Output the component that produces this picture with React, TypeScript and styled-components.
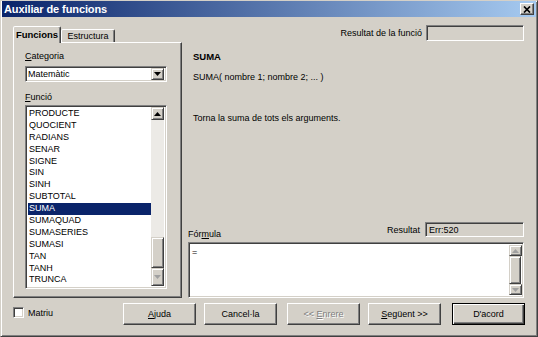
import React from "react";
import styled, { createGlobalStyle } from "styled-components";

const FUNCTIONS = [
  "PRODUCTE",
  "QUOCIENT",
  "RADIANS",
  "SENAR",
  "SIGNE",
  "SIN",
  "SINH",
  "SUBTOTAL",
  "SUMA",
  "SUMAQUAD",
  "SUMASERIES",
  "SUMASI",
  "TAN",
  "TANH",
  "TRUNCA",
];

const GlobalStyle = createGlobalStyle`
  html, body {
    margin: 0;
    padding: 0;
    background: #d4d0c8;
  }
  body {
    font-family: "Liberation Sans", Arial, sans-serif;
    font-size: 9px;
    color: #000;
  }
  * {
    box-sizing: border-box;
  }
`;

const Window = styled.div`
  width: 538px;
  height: 337px;
  background: #d4d0c8;
  border: 1px solid;
  border-color: #d4d0c8 #404040 #404040 #d4d0c8;
  box-shadow: inset 1px 1px #fff, inset -1px -1px #808080;
  padding: 1px;
  display: flex;
  flex-direction: column;
`;

const TitleBar = styled.div`
  height: 16px;
  margin-top: -1px;
  display: flex;
  align-items: center;
  padding: 0 2px 0 2px;
  background: linear-gradient(to right, #0a246a, #a6caf0);
`;

const Title = styled.div`
  color: #fff;
  font-weight: 700;
  font-size: 11px;
  letter-spacing: -0.1px;
`;

const CloseButton = styled.div`
  margin-left: auto;
  width: 14px;
  height: 12px;
  background: #d4d0c8;
  border: 1px solid;
  border-color: #fff #404040 #404040 #fff;
  box-shadow: inset -1px -1px #808080;
  display: flex;
  align-items: center;
  justify-content: center;
`;

const Content = styled.div`
  flex: 1;
  display: flex;
  flex-direction: column;
  padding: 9px 11px 0 11px;
`;

const Main = styled.div`
  height: 272px;
  display: flex;
`;

const LeftCol = styled.div`
  width: 169px;
  display: flex;
  flex-direction: column;
`;

const TabRow = styled.div`
  display: flex;
  align-items: flex-end;
  height: 16px;
`;

const Tab = styled.div<{ $active?: boolean; $w: number }>`
  width: ${(p) => p.$w}px;
  height: ${(p) => (p.$active ? 17 : 13)}px;
  margin-bottom: ${(p) => (p.$active ? -1 : 0)}px;
  background: #d4d0c8;
  border: 1px solid;
  border-bottom: none;
  border-color: #fff #404040 transparent #fff;
  box-shadow: inset -1px 0 #808080;
  border-radius: 2px 2px 0 0;
  font-weight: ${(p) => (p.$active ? 700 : 400)};
  font-size: ${(p) => (p.$active ? 9.5 : 9)}px;
  display: flex;
  align-items: center;
  justify-content: center;
  padding-bottom: ${(p) => (p.$active ? 2 : 0)}px;
  z-index: ${(p) => (p.$active ? 1 : 0)};
`;

const Panel = styled.div`
  flex: 1;
  border: 1px solid;
  border-color: #fff #404040 #404040 #fff;
  box-shadow: inset -1px -1px #808080;
  padding: 7px 0 0 11px;
  display: flex;
  flex-direction: column;
`;

const FieldLabel = styled.div<{ $gap?: number }>`
  line-height: 12px;
  height: 12px;
  margin-top: ${(p) => p.$gap ?? 0}px;
`;

const Sunken = styled.div`
  border: 1px solid;
  border-color: #808080 #fff #fff #808080;
  box-shadow: inset 1px 1px #404040, inset -1px -1px #d4d0c8;
`;

const Dropdown = styled(Sunken)`
  width: 142px;
  height: 16px;
  margin-top: 4px;
  background: #fff;
  display: flex;
  align-items: center;
  padding: 2px 2px 2px 2px;
`;

const DropText = styled.div`
  flex: 1;
  line-height: 12px;
`;

const SmallButton = styled.div<{ $h?: number }>`
  width: 13px;
  height: ${(p) => p.$h ?? 13}px;
  flex-shrink: 0;
  background: #d4d0c8;
  border: 1px solid;
  border-color: #d4d0c8 #404040 #404040 #d4d0c8;
  box-shadow: inset 1px 1px #fff, inset -1px -1px #808080;
  display: flex;
  align-items: center;
  justify-content: center;
`;

const ListBox = styled(Sunken)`
  width: 142px;
  height: 184px;
  margin-top: 2px;
  background: #fff;
  display: flex;
  padding: 1px 2px 2px 2px;
`;

const ListItems = styled.div`
  flex: 1;
  padding-top: 1px;
  overflow: hidden;
`;

const ListItem = styled.div<{ $selected?: boolean }>`
  height: 11.9px;
  line-height: 11.9px;
  padding-left: 1px;
  white-space: nowrap;
  background: ${(p) => (p.$selected ? "#0a246a" : "transparent")};
  color: ${(p) => (p.$selected ? "#fff" : "#000")};
`;

const ScrollBar = styled.div<{ $w: number }>`
  width: ${(p) => p.$w}px;
  display: flex;
  flex-direction: column;
`;

const Track = styled.div`
  flex: 1;
  background: #eceae6;
  display: flex;
  flex-direction: column;
  justify-content: flex-end;
`;

const Thumb = styled.div<{ $h: number }>`
  height: ${(p) => p.$h}px;
  background: #d4d0c8;
  border: 1px solid;
  border-color: #d4d0c8 #404040 #404040 #d4d0c8;
  box-shadow: inset 1px 1px #fff, inset -1px -1px #808080;
`;

const RightCol = styled.div`
  flex: 1;
  display: flex;
  flex-direction: column;
`;

const TopRow = styled.div`
  height: 16px;
  margin-top: -1px;
  display: flex;
  align-items: center;
  justify-content: flex-end;
  gap: 4px;
  padding-right: 1px;
`;

const ReadBox = styled(Sunken)<{ $w: number; $h: number }>`
  width: ${(p) => p.$w}px;
  height: ${(p) => p.$h}px;
  background: #d4d0c8;
  display: flex;
  align-items: center;
  padding-left: 3px;
`;

const Desc = styled.div`
  padding-left: 11px;
  display: flex;
  flex-direction: column;
`;

const FuncName = styled.div`
  margin-top: 10px;
  font-weight: 700;
  font-size: 9.5px;
  line-height: 12px;
`;

const DescLine = styled.div<{ $gap: number }>`
  margin-top: ${(p) => p.$gap}px;
  line-height: 12px;
`;

const Spacer = styled.div`
  flex: 1;
`;

const FormulaHead = styled.div`
  height: 20px;
  padding-left: 6px;
  display: flex;
`;

const FormulaLabel = styled.div`
  align-self: flex-end;
  line-height: 12px;
  margin-bottom: 2px;
`;

const ResultGroup = styled.div`
  margin-left: auto;
  align-self: flex-start;
  display: flex;
  align-items: center;
  gap: 5px;
  padding-right: 1px;
`;

const FormulaArea = styled(Sunken)`
  margin-left: 6px;
  margin-right: 1px;
  height: 56px;
  background: #fff;
  display: flex;
  padding: 2px 2px 2px 2px;
`;

const FormulaText = styled.div`
  flex: 1;
  padding: 1px 0 0 1px;
  line-height: 12px;
`;

const Footer = styled.div`
  margin-top: 5px;
  height: 22px;
  display: flex;
  align-items: flex-start;
`;

const CheckRow = styled.div`
  margin-top: 4px;
  display: flex;
  align-items: center;
  gap: 4px;
`;

const CheckBox = styled(Sunken)`
  width: 11px;
  height: 11px;
  background: #fff;
`;

const ButtonGroup = styled.div`
  margin-left: auto;
  display: flex;
`;

const Button = styled.div<{ $gap?: number; $disabled?: boolean; $default?: boolean }>`
  width: 73px;
  height: 22px;
  margin-left: ${(p) => p.$gap ?? 0}px;
  background: #d4d0c8;
  border: 1px solid;
  border-color: ${(p) => (p.$default ? "#000" : "#fff #404040 #404040 #fff")};
  box-shadow: ${(p) =>
    p.$default
      ? "inset 1px 1px #fff, inset -1px -1px #404040, inset -2px -2px #808080"
      : "inset -1px -1px #808080"};
  display: flex;
  align-items: center;
  justify-content: center;
  white-space: pre;
  color: ${(p) => (p.$disabled ? "#808080" : "#000")};
  text-shadow: ${(p) => (p.$disabled ? "1px 1px #fff" : "none")};
`;

function Arrow({ dir, color }: { dir: "up" | "down"; color: string }) {
  return (
    <svg width="7" height="4" viewBox="0 0 7 4">
      <path d={dir === "up" ? "M3.5 0 L7 4 L0 4Z" : "M0 0 L7 0 L3.5 4Z"} fill={color} />
    </svg>
  );
}

export default function App() {
  return (
    <>
      <GlobalStyle />
      <Window>
        <TitleBar>
          <Title>Auxiliar de funcions</Title>
          <CloseButton>
            <svg width="8" height="7" viewBox="0 0 8 7">
              <path d="M1 0.5 L7 6.5 M7 0.5 L1 6.5" stroke="#000" strokeWidth="1.7" />
            </svg>
          </CloseButton>
        </TitleBar>
        <Content>
          <Main>
            <LeftCol>
              <TabRow>
                <Tab $active $w={48}>
                  Funcions
                </Tab>
                <Tab $w={54}>Estructura</Tab>
              </TabRow>
              <Panel>
                <FieldLabel>
                  <u>C</u>ategoria
                </FieldLabel>
                <Dropdown>
                  <DropText>Matemàtic</DropText>
                  <SmallButton $h={12}>
                    <Arrow dir="down" color="#000" />
                  </SmallButton>
                </Dropdown>
                <FieldLabel $gap={9}>
                  <u>F</u>unció
                </FieldLabel>
                <ListBox>
                  <ListItems>
                    {FUNCTIONS.map((f) => (
                      <ListItem key={f} $selected={f === "SUMA"}>
                        {f}
                      </ListItem>
                    ))}
                  </ListItems>
                  <ScrollBar $w={13}>
                    <SmallButton>
                      <Arrow dir="up" color="#000" />
                    </SmallButton>
                    <Track>
                      <Thumb $h={31} />
                    </Track>
                    <SmallButton $h={18}>
                      <Arrow dir="down" color="#a0a0a0" />
                    </SmallButton>
                  </ScrollBar>
                </ListBox>
              </Panel>
            </LeftCol>
            <RightCol>
              <TopRow>
                Resultat de la funció
                <ReadBox $w={98} $h={16} />
              </TopRow>
              <Desc>
                <FuncName>SUMA</FuncName>
                <DescLine $gap={8}>SUMA( nombre 1; nombre 2; ... )</DescLine>
                <DescLine $gap={29}>Torna la suma de tots els arguments.</DescLine>
              </Desc>
              <Spacer />
              <FormulaHead>
                <FormulaLabel>
                  Fór<u>m</u>ula
                </FormulaLabel>
                <ResultGroup>
                  Resultat
                  <ReadBox $w={99} $h={15}>
                    Err:520
                  </ReadBox>
                </ResultGroup>
              </FormulaHead>
              <FormulaArea>
                <FormulaText>=</FormulaText>
                <ScrollBar $w={12}>
                  <SmallButton $h={11}>
                    <Arrow dir="up" color="#a0a0a0" />
                  </SmallButton>
                  <Track>
                    <Thumb $h={28} />
                  </Track>
                  <SmallButton $h={11}>
                    <Arrow dir="down" color="#a0a0a0" />
                  </SmallButton>
                </ScrollBar>
              </FormulaArea>
            </RightCol>
          </Main>
          <Footer>
            <CheckRow>
              <CheckBox />
              Matriu
            </CheckRow>
            <ButtonGroup>
              <Button>
                <u>A</u>juda
              </Button>
              <Button $gap={8}>Cancel·la</Button>
              <Button $gap={10} $disabled>
                {"<< "}
                <u>E</u>nrere
              </Button>
              <Button $gap={8}>
                <u>S</u>
                {"egüent >>"}
              </Button>
              <Button $gap={11} $default>
                D'acord
              </Button>
            </ButtonGroup>
          </Footer>
        </Content>
      </Window>
    </>
  );
}
